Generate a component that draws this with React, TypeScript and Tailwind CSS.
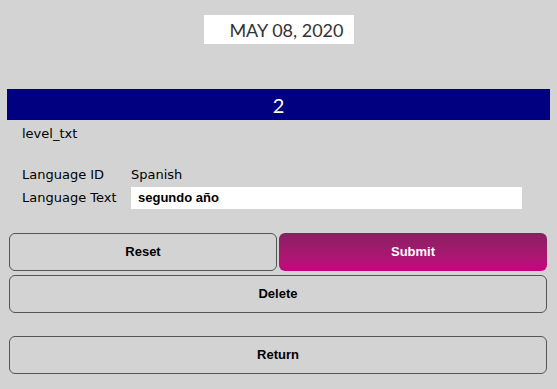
import React from 'react';

const labelFont = { fontFamily: '"DejaVu Sans", "Noto Sans", sans-serif' };
const buttonFont = { fontFamily: '"Liberation Sans", Arial, sans-serif' };

function ActionButton({ label, primary, className }: { label: string; primary?: boolean; className?: string }) {
  return (
    <button
      className={
        (primary
          ? 'h-[38px] rounded-[6px] bg-gradient-to-b from-[#871f62] to-[#c4047e] text-white text-[13px] font-bold '
          : 'h-[38px] rounded-[6px] border border-[#555] bg-[#d3d3d3] text-black text-[13px] font-bold ') +
        (className ?? '')
      }
      style={buttonFont}
    >
      {label}
    </button>
  );
}

export default function App() {
  return (
    <div className="w-[557px] h-[389px] bg-[#d3d3d3] overflow-hidden" style={labelFont}>
      <div className="flex justify-center pt-[15px]">
        <div
          className="w-[150px] h-[29px] bg-white flex items-center justify-end pr-[10px] pt-[1px] text-[18px] text-[#333]"
          style={{ fontFamily: '"Lato", "Open Sans", sans-serif' }}
        >
          MAY 08, 2020
        </div>
      </div>

      <div
        className="mx-[7px] mt-[45px] h-[31px] bg-[#000080] flex items-center justify-center text-white text-[20px]"
        style={{ fontFamily: '"Lato", "Open Sans", sans-serif' }}
      >
        2
      </div>

      <div className="pl-[22px] mt-[4px] text-[13px] text-black leading-[20px]">level_txt</div>

      <div className="pl-[22px] mt-[21px] text-[13px] text-black">
        <div className="flex items-center h-[20px]">
          <span className="w-[109px]">Language ID</span>
          <span>Spanish</span>
        </div>
        <div className="flex items-center mt-[2px]">
          <span className="w-[109px]">Language Text</span>
          <div
            className="w-[391px] h-[22px] bg-white flex items-center pl-[7px] text-[13px] font-bold"
            style={buttonFont}
          >
            segundo año
          </div>
        </div>
      </div>

      <div className="pl-[9px] w-[547px] mt-[24px] flex flex-col gap-[4px]">
        <div className="flex gap-[2px]">
          <ActionButton label="Reset" className="w-[268px]" />
          <ActionButton label="Submit" primary className="w-[268px]" />
        </div>
        <ActionButton label="Delete" className="w-full" />
        <ActionButton label="Return" className="w-full mt-[19px]" />
      </div>
    </div>
  );
}
